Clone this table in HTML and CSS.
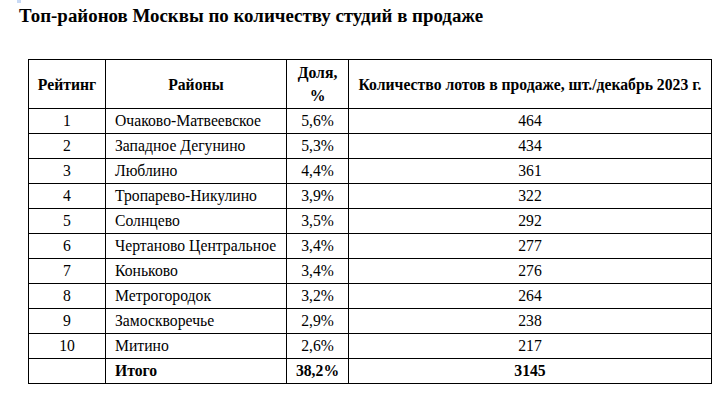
FILE: index.html
```html
<!DOCTYPE html>
<html lang="ru">
<head>
<meta charset="utf-8">
<title>Топ-районов Москвы</title>
<link rel="stylesheet" href="styles.css">
</head>
<body>
<div class="page">
  <div class="mark"></div>
  <h1 class="title">Топ-районов Москвы по количеству студий в продаже</h1>
  <table class="stats">
    <colgroup>
      <col class="c-rank">
      <col class="c-name">
      <col class="c-share">
      <col class="c-lots">
    </colgroup>
    <thead>
      <tr>
        <th>Рейтинг</th>
        <th>Районы</th>
        <th>Доля,<br>%</th>
        <th>Количество лотов в продаже, шт./декабрь 2023 г.</th>
      </tr>
    </thead>
    <tbody>
      <tr><td class="center">1</td><td class="name">Очаково-Матвеевское</td><td class="center">5,6%</td><td class="center">464</td></tr>
      <tr><td class="center">2</td><td class="name">Западное Дегунино</td><td class="center">5,3%</td><td class="center">434</td></tr>
      <tr><td class="center">3</td><td class="name">Люблино</td><td class="center">4,4%</td><td class="center">361</td></tr>
      <tr><td class="center">4</td><td class="name">Тропарево-Никулино</td><td class="center">3,9%</td><td class="center">322</td></tr>
      <tr><td class="center">5</td><td class="name">Солнцево</td><td class="center">3,5%</td><td class="center">292</td></tr>
      <tr><td class="center">6</td><td class="name">Чертаново Центральное</td><td class="center">3,4%</td><td class="center">277</td></tr>
      <tr><td class="center">7</td><td class="name">Коньково</td><td class="center">3,4%</td><td class="center">276</td></tr>
      <tr><td class="center">8</td><td class="name">Метрогородок</td><td class="center">3,2%</td><td class="center">264</td></tr>
      <tr><td class="center">9</td><td class="name">Замоскворечье</td><td class="center">2,9%</td><td class="center">238</td></tr>
      <tr><td class="center">10</td><td class="name">Митино</td><td class="center">2,6%</td><td class="center">217</td></tr>
      <tr class="total"><td class="center"></td><td class="name">Итого</td><td class="center">38,2%</td><td class="center">3145</td></tr>
    </tbody>
  </table>
</div>
</body>
</html>
```

FILE: styles.css
```css
html, body {
  margin: 0;
  padding: 0;
  background: #ffffff;
}

body {
  font-family: "Liberation Serif", "Times New Roman", serif;
  color: #000000;
}

.page {
  position: relative;
  width: 720px;
  height: 403px;
  overflow: hidden;
}

.mark {
  position: absolute;
  left: 17px;
  top: 0;
  width: 4px;
  height: 3px;
  background: #c9daf5;
}

.title {
  margin: 0;
  padding: 5px 0 0 19px;
  font-size: 18.9px;
  font-weight: bold;
  line-height: 22px;
}

.stats {
  margin: 32px 0 0 28px;
  border-collapse: collapse;
  table-layout: fixed;
  width: 683px;
  font-size: 15.7px;
}

.c-rank { width: 77px; }
.c-name { width: 181px; }
.c-share { width: 62px; }
.c-lots { width: 363px; }

.stats th,
.stats td {
  border: 1px solid #000000;
  padding: 0;
  vertical-align: middle;
}

.stats th {
  height: 48px;
  font-weight: bold;
  text-align: center;
  line-height: 23px;
}

.stats td {
  height: 24px;
  line-height: 18px;
}

.stats td.center {
  text-align: center;
}

.stats td.name {
  padding-left: 9px;
  white-space: nowrap;
}

.stats tr.total td {
  font-weight: bold;
}
```
